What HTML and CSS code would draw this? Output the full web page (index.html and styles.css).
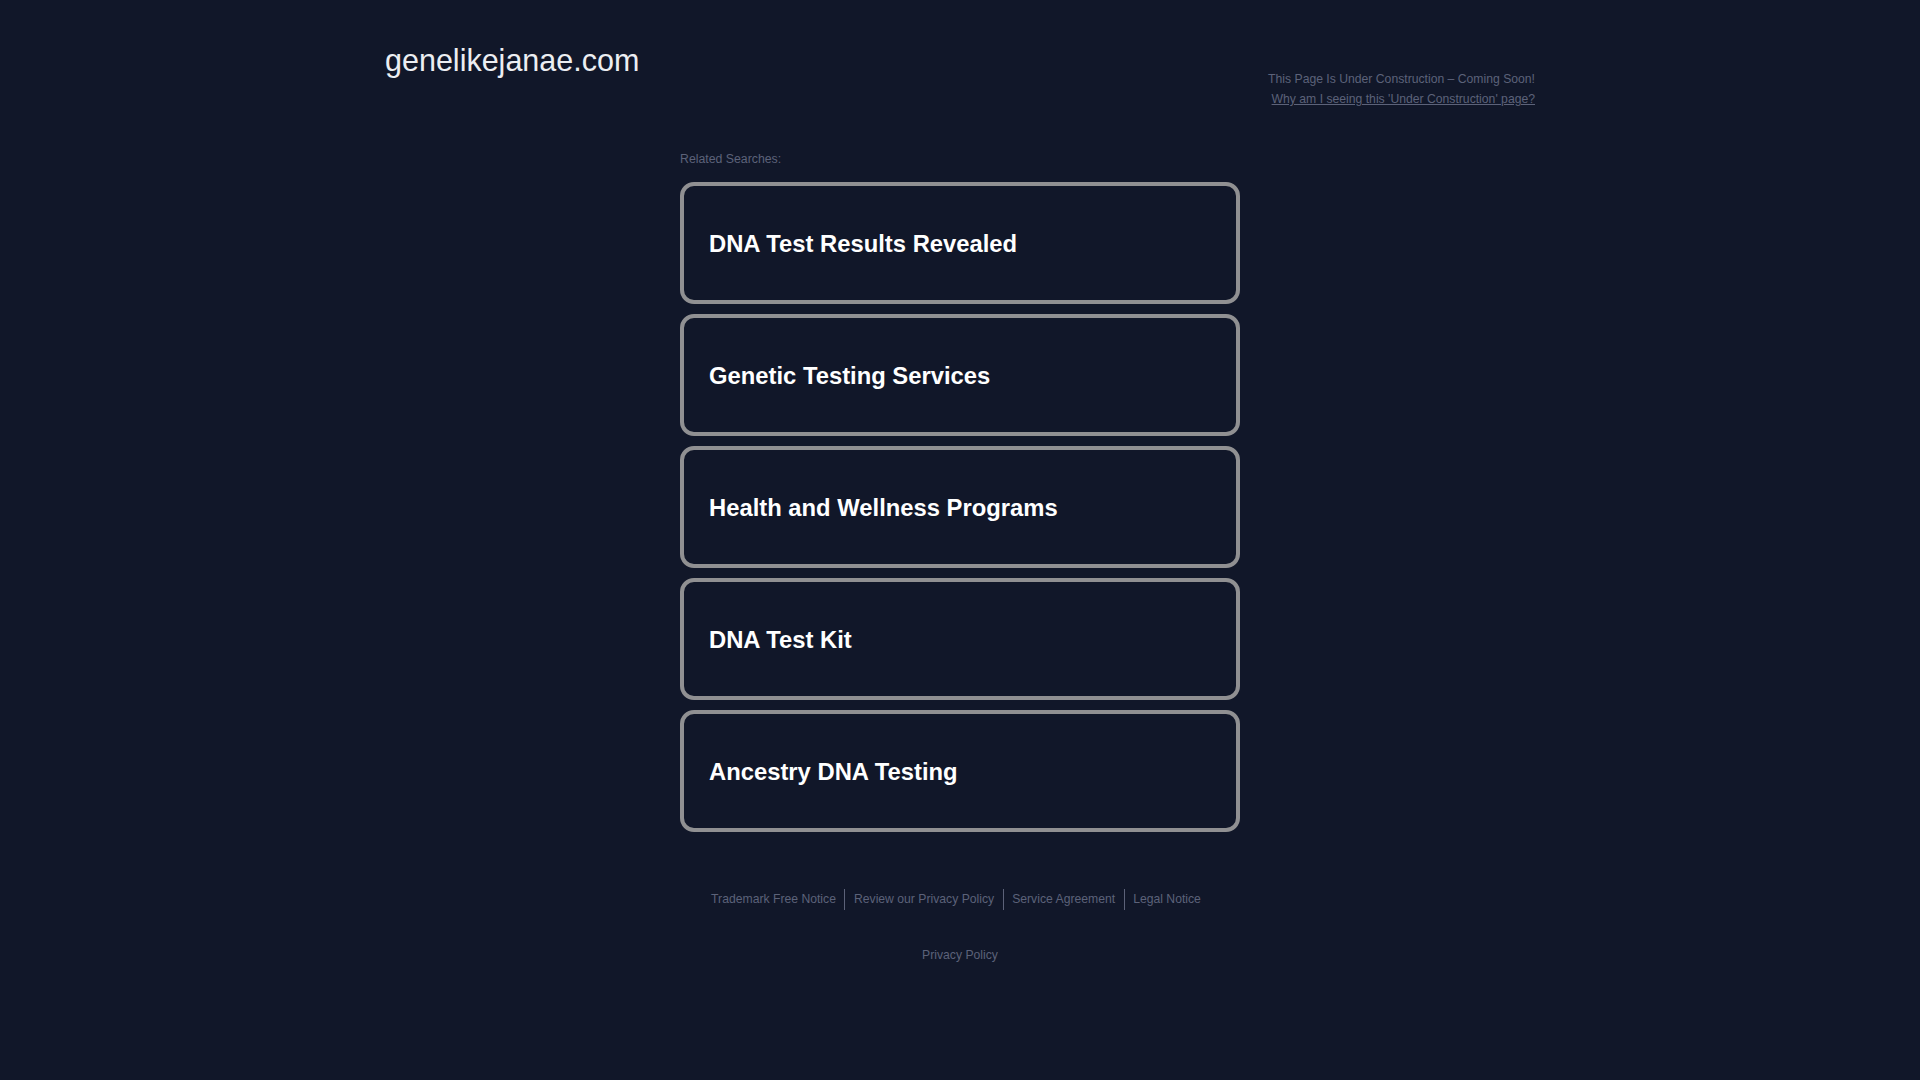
FILE: index.html
```html
<!DOCTYPE html>
<html lang="en">
<head>
<meta charset="utf-8">
<title>genelikejanae.com</title>
<link rel="stylesheet" href="styles.css">
</head>
<body>
<div class="page">
  <header class="header">
    <div class="domain">genelikejanae.com</div>
    <div class="notice">
      <div class="notice-line">This Page Is Under Construction – Coming Soon!</div>
      <a class="notice-link" href="#">Why am I seeing this 'Under Construction' page?</a>
    </div>
  </header>
  <main class="main">
    <div class="related">Related Searches:</div>
    <ul class="cards">
      <li class="card"><a href="#">DNA Test Results Revealed</a></li>
      <li class="card"><a href="#">Genetic Testing Services</a></li>
      <li class="card"><a href="#">Health and Wellness Programs</a></li>
      <li class="card"><a href="#">DNA Test Kit</a></li>
      <li class="card"><a href="#">Ancestry DNA Testing</a></li>
    </ul>
  </main>
  <footer class="footer">
    <nav class="footer-links">
      <a href="#">Trademark Free Notice</a>
      <a href="#">Review our Privacy Policy</a>
      <a href="#">Service Agreement</a>
      <a href="#">Legal Notice</a>
    </nav>
    <div class="footer-privacy"><a href="#">Privacy Policy</a></div>
  </footer>
</div>
</body>
</html>
```

FILE: styles.css
```css
html, body {
  margin: 0;
  padding: 0;
  background: #111729;
  font-family: "Liberation Sans", Arial, sans-serif;
}

a { text-decoration: none; color: inherit; }

.page {
  min-height: 1080px;
}

.header {
  width: 1150px;
  margin: 0 auto;
  display: flex;
  justify-content: space-between;
  align-items: flex-start;
}

.domain {
  padding-top: 45px;
  font-size: 30.5px;
  line-height: 30px;
  color: #eceef2;
}

.notice {
  padding-top: 69px;
  text-align: right;
  font-size: 12.2px;
  line-height: 20px;
  color: #5c6279;
}

.notice-line { display: block; }

.notice-link {
  display: block;
  text-decoration: underline;
  color: #5c6279;
}

.main {
  width: 560px;
  margin: 0 auto;
  padding-top: 40px;
}

.related {
  font-size: 12.3px;
  line-height: 20px;
  color: #5c6279;
  margin-bottom: 13px;
}

.cards {
  list-style: none;
  margin: 0;
  padding: 0;
  display: flex;
  flex-direction: column;
  gap: 10px;
}

.card {
  box-sizing: border-box;
  height: 122px;
  border: 4px solid #909092;
  border-radius: 14px;
  display: flex;
  align-items: center;
  padding: 2px 25px 0;
}

.card a {
  font-size: 23.8px;
  font-weight: bold;
  color: #ffffff;
}

.footer {
  padding-top: 57px;
  text-align: center;
  font-size: 12.2px;
  color: #5c6279;
}

.footer-links {
  display: flex;
  justify-content: center;
  padding-right: 8px;
}

.footer-links a {
  padding: 0 8.5px;
  line-height: 21px;
  border-left: 1px solid #5c6279;
}

.footer-links a:first-child {
  border-left: none;
}

.footer-privacy {
  margin-top: 35px;
  line-height: 20px;
}
```
